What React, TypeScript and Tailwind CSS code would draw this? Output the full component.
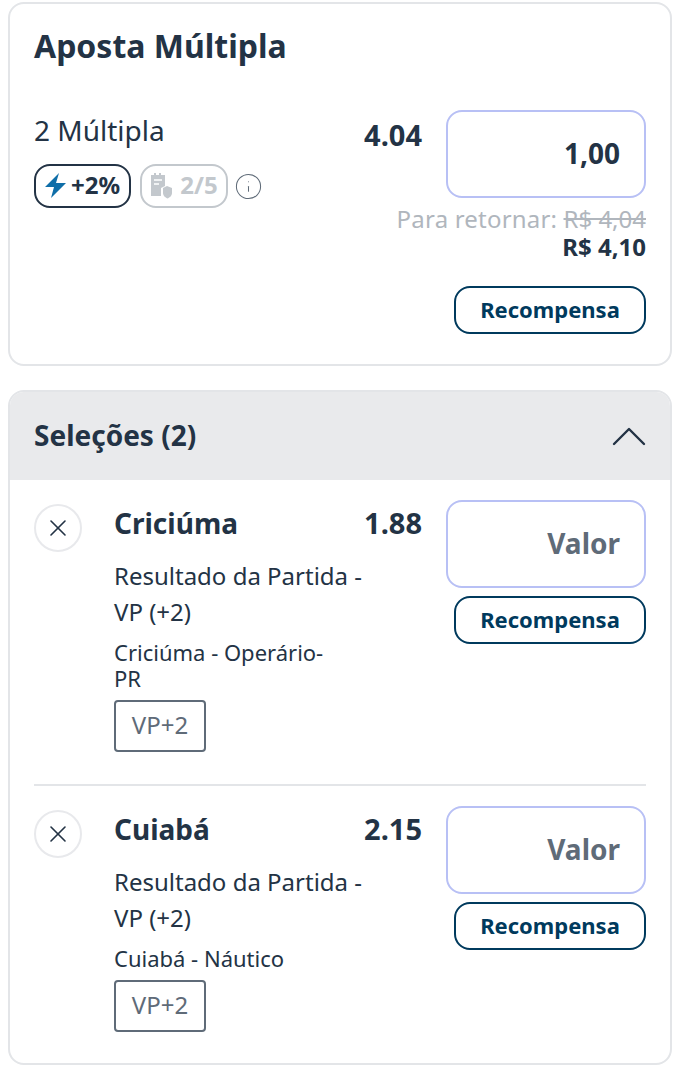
import React from 'react';
import { X, Info } from 'lucide-react';

const Recompensa = () => (
  <button className="w-[192px] h-[48px] rounded-[16px] border-2 border-[#003a5d] bg-white pb-[2px] text-[22px] leading-none font-bold text-[#003a5d]">
    Recompensa
  </button>
);

const StakeInput = ({ value }: { value?: string }) => (
  <div className="w-[200px] h-[88px] rounded-[16px] border-2 border-[#b8c0f5] bg-white flex items-center justify-end pr-[24px] pb-[2px] text-[28px] font-bold">
    {value ? <span className="text-[#233345]">{value}</span> : <span className="text-[#5f6b78]">Valor</span>}
  </div>
);

interface SelectionProps {
  team: string;
  odd: string;
  event: string;
  last?: boolean;
}

const Selection = ({ team, odd, event, last = false }: SelectionProps) => (
  <div className={last ? 'flex pt-[20px] pb-[32px]' : 'flex pt-[20px] pb-[32px] border-b-2 border-[#e3e5e8]'}>
    <div className="w-[80px] shrink-0 pt-[4px]">
      <div className="w-[48px] h-[48px] rounded-full border-2 border-[#e8e9ec] flex items-center justify-center text-[#233345]">
        <X size={28} strokeWidth={1.4} />
      </div>
    </div>
    <div className="flex-1 min-w-0">
      <div className="flex justify-between items-start">
        <span className="text-[28px] leading-[46px] font-bold">{team}</span>
        <span className="text-[29px] leading-[46px] font-bold mr-[24px]">{odd}</span>
      </div>
      <div className="w-[250px] mt-[12px] text-[24px] leading-[36px]">Resultado da Partida - VP (+2)</div>
      <div className="w-[220px] mt-[9px] text-[22px] leading-[26px]">{event}</div>
      <div className="w-[92px] h-[52px] mt-[9px] pb-[2px] rounded-[4px] border-2 border-[#5f6b78] flex items-center justify-center text-[24px] text-[#5f6b78]">
        VP+2
      </div>
    </div>
    <div className="w-[200px] shrink-0 flex flex-col items-end gap-[8px]">
      <StakeInput />
      <Recompensa />
    </div>
  </div>
);

const App: React.FC = () => {
  return (
    <div className="w-[680px] h-[1072px] bg-white text-[#233345] pt-[2px] px-[8px] font-['Noto_Sans','Open_Sans',sans-serif] overflow-hidden">
      <div className="h-[364px] rounded-[16px] border-2 border-[#e3e5e8] pl-[24px] pr-[24px]">
        <h1 className="text-[32px] leading-[42px] font-bold mt-[21px]">Aposta Múltipla</h1>
        <div className="flex justify-between mt-[43px]">
          <div>
            <div className="text-[28px] leading-[36px] mt-[2px]">2 Múltipla</div>
            <div className="flex items-center mt-[16px]">
              <div className="h-[44px] w-[97px] pb-[2px] rounded-[16px] border-2 border-[#233345] flex items-center justify-center gap-[4px] text-[24px] font-bold">
                <svg width="22" height="26" viewBox="0 0 22 26" className="mt-[2px]">
                  <path d="M14 0 L0 14 L9 14 L6 25 L21 10 L11 10 Z" fill="#0f6ea8" />
                </svg>
                +2%
              </div>
              <div className="h-[44px] w-[88px] ml-[9px] pb-[2px] rounded-[16px] border-2 border-[#c3c8cd] flex items-center justify-center gap-[6px] text-[24px] font-bold text-[#c3c8cd]">
                <svg width="24" height="26" viewBox="0 0 24 26" className="mt-[2px]">
                  <path d="M1 2 H4 V0 H6 V2 H9 V0 H11 V2 H15 V13 L11 15 V23 H1 Z" fill="#c3c8cd" />
                  <path d="M4 7 H12 M4 11 H9" stroke="#fff" strokeWidth="1.5" />
                  <path d="M13 15 L17 13 L22 15 V20 C22 23 19 25 17.5 25.5 C16 25 13 23 13 20 Z" fill="#c3c8cd" />
                </svg>
                2/5
              </div>
              <Info size={29} strokeWidth={0.85} className="text-[#5f6b78] ml-[6px]" />
            </div>
          </div>
          <div className="flex items-start gap-[24px]">
            <span className="text-[29px] leading-[50px] font-bold">4.04</span>
            <div className="w-[200px] flex flex-col items-end">
              <StakeInput value="1,00" />
              <div className="text-[24px] leading-[28px] mt-[7px] text-[#b0b6bd] whitespace-nowrap">
                <span className="tracking-[0.2px]">Para retornar:</span> <span className="line-through">R$ 4,04</span>
              </div>
              <div className="text-[24px] leading-[28px] font-bold">R$ 4,10</div>
              <div className="mt-[25px]">
                <Recompensa />
              </div>
            </div>
          </div>
        </div>
      </div>
      <div className="mt-[24px] h-[675px] rounded-[16px] border-2 border-[#e3e5e8] overflow-hidden">
        <div className="h-[88px] bg-[#e9eaec] px-[24px] flex items-center justify-between">
          <span className="text-[28px] font-bold pb-[2px]">Seleções (2)</span>
          <svg width="34" height="20" viewBox="0 0 34 20" fill="none">
            <path d="M2 18 L17 3 L32 18" stroke="#233345" strokeWidth="2.4" strokeLinecap="round" strokeLinejoin="round" />
          </svg>
        </div>
        <div className="px-[24px]">
          <Selection team="Criciúma" odd="1.88" event="Criciúma - Operário-PR" />
          <Selection team="Cuiabá" odd="2.15" event="Cuiabá - Náutico" last />
        </div>
      </div>
    </div>
  );
};

export default App;
